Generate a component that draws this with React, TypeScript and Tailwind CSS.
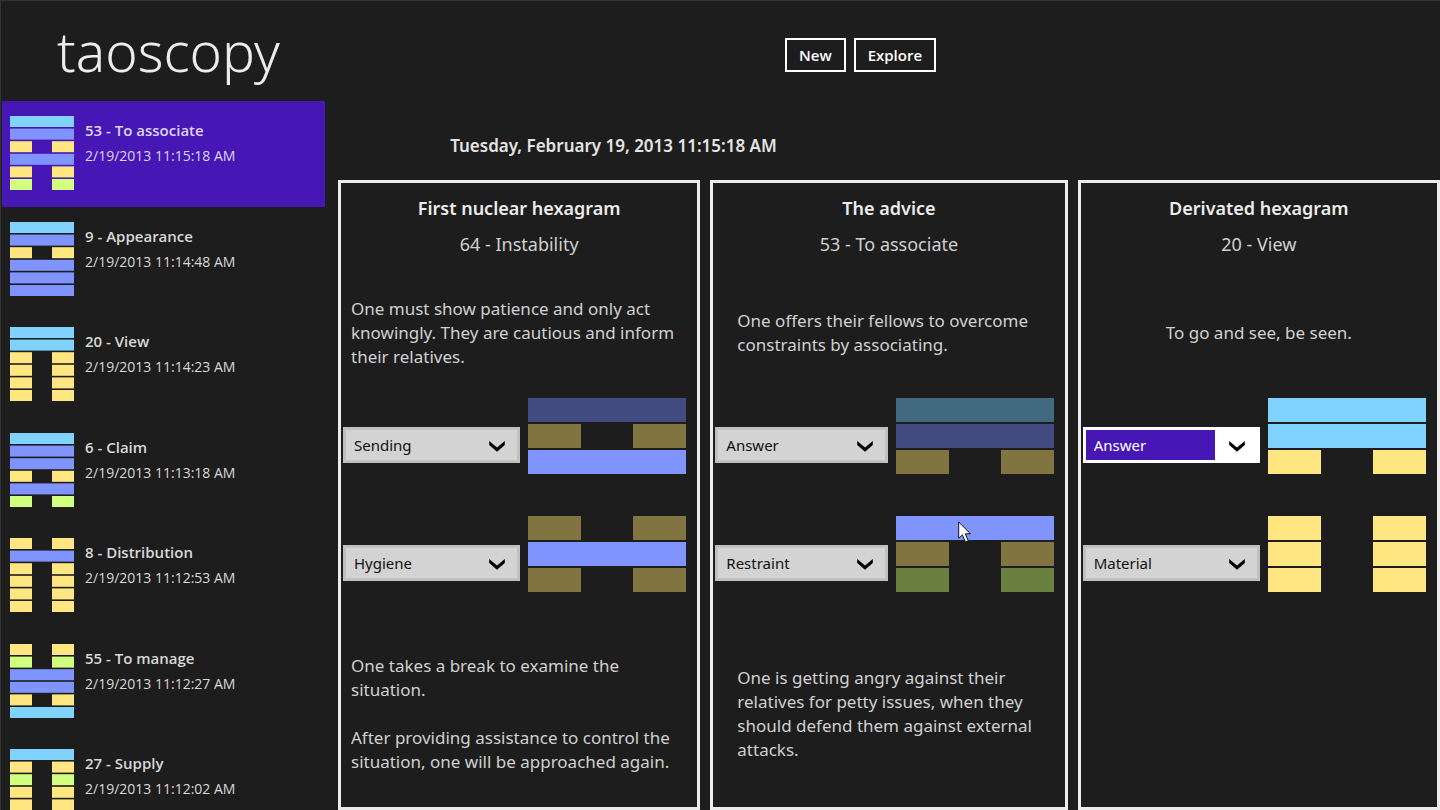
import { useState } from 'react'

type LineKind = 'sky' | 'blue' | 'yellow' | 'green'

type HistoryEntry = {
  id: number
  title: string
  date: string
  lines: LineKind[]
}

type Trigram = {
  id: string
  label: string
  value: string
  lines: LineKind[]
  dimmed: boolean[]
  focused?: boolean
  pointer?: boolean
}

type Reading = {
  id: string
  heading: string
  hexagram: string
  intro: string
  outcome: string[]
  textPadding: string
  trigrams: Trigram[]
}

const LINE_COLORS: Record<LineKind, string> = {
  sky: '#80d2ff',
  blue: '#8094ff',
  yellow: '#ffe680',
  green: '#d2ff80',
}

const DIM_COLORS: Record<LineKind, string> = {
  sky: '#416a80',
  blue: '#414b80',
  yellow: '#807441',
  green: '#698041',
}

const OPTIONS = ['Answer', 'Hygiene', 'Material', 'Restraint', 'Sending']

const HISTORY: HistoryEntry[] = [
  { id: 1, title: '53 - To associate', date: '2/19/2013 11:15:18 AM', lines: ['sky', 'blue', 'yellow', 'blue', 'yellow', 'green'] },
  { id: 2, title: '9 - Appearance', date: '2/19/2013 11:14:48 AM', lines: ['sky', 'blue', 'yellow', 'blue', 'blue', 'blue'] },
  { id: 3, title: '20 - View', date: '2/19/2013 11:14:23 AM', lines: ['sky', 'sky', 'yellow', 'yellow', 'yellow', 'yellow'] },
  { id: 4, title: '6 - Claim', date: '2/19/2013 11:13:18 AM', lines: ['sky', 'blue', 'blue', 'yellow', 'blue', 'green'] },
  { id: 5, title: '8 - Distribution', date: '2/19/2013 11:12:53 AM', lines: ['yellow', 'blue', 'yellow', 'yellow', 'yellow', 'yellow'] },
  { id: 6, title: '55 - To manage', date: '2/19/2013 11:12:27 AM', lines: ['yellow', 'green', 'blue', 'blue', 'yellow', 'sky'] },
  { id: 7, title: '27 - Supply', date: '2/19/2013 11:12:02 AM', lines: ['sky', 'yellow', 'green', 'yellow', 'yellow', 'yellow'] },
]

const READINGS: Reading[] = [
  {
    id: 'nuclear',
    heading: 'First nuclear hexagram',
    hexagram: '64 - Instability',
    intro: 'One must show patience and only act knowingly. They are cautious and inform their relatives.',
    outcome: [
      'One takes a break to examine the situation.',
      'After providing assistance to control the situation, one will be approached again.',
    ],
    textPadding: 'px-[10px]',
    trigrams: [
      { id: 'nuclear-upper', label: 'Upper trigram', value: 'Sending', lines: ['blue', 'yellow', 'blue'], dimmed: [true, true, false] },
      { id: 'nuclear-lower', label: 'Lower trigram', value: 'Hygiene', lines: ['yellow', 'blue', 'yellow'], dimmed: [true, false, true] },
    ],
  },
  {
    id: 'advice',
    heading: 'The advice',
    hexagram: '53 - To associate',
    intro: 'One offers their fellows to overcome constraints by associating.',
    outcome: [
      'One is getting angry against their relatives for petty issues, when they should defend them against external attacks.',
    ],
    textPadding: 'px-6',
    trigrams: [
      { id: 'advice-upper', label: 'Upper trigram', value: 'Answer', lines: ['sky', 'blue', 'yellow'], dimmed: [true, true, true] },
      { id: 'advice-lower', label: 'Lower trigram', value: 'Restraint', lines: ['blue', 'yellow', 'green'], dimmed: [false, true, true], pointer: true },
    ],
  },
  {
    id: 'derivated',
    heading: 'Derivated hexagram',
    hexagram: '20 - View',
    intro: 'To go and see, be seen.',
    outcome: [],
    textPadding: 'px-6',
    trigrams: [
      { id: 'derivated-upper', label: 'Upper trigram', value: 'Answer', lines: ['sky', 'sky', 'yellow'], dimmed: [false, false, false], focused: true },
      { id: 'derivated-lower', label: 'Lower trigram', value: 'Material', lines: ['yellow', 'yellow', 'yellow'], dimmed: [false, false, false] },
    ],
  },
]

// sky and blue are solid lines, yellow and green are broken ones
function isSolid(kind: LineKind) {
  return kind === 'sky' || kind === 'blue'
}

function Hexagram({ lines }: { lines: LineKind[] }) {
  return (
    <svg className="h-[74px] w-16 shrink-0" viewBox="0 0 64 74" aria-hidden="true">
      {lines.map((kind, i) => {
        const y = i * 12.6
        return isSolid(kind) ? (
          <rect key={i} x="0" y={y} width="64" height="11" fill={LINE_COLORS[kind]} />
        ) : (
          <g key={i} fill={LINE_COLORS[kind]}>
            <rect x="0" y={y} width="22" height="11" />
            <rect x="42" y={y} width="22" height="11" />
          </g>
        )
      })}
    </svg>
  )
}

function TrigramDrawing({ lines, dimmed }: { lines: LineKind[]; dimmed: boolean[] }) {
  return (
    <svg className="h-[76px] w-[158px]" viewBox="0 0 158 76" aria-hidden="true">
      {lines.map((kind, i) => {
        const y = i * 26
        const fill = dimmed[i] ? DIM_COLORS[kind] : LINE_COLORS[kind]
        return isSolid(kind) ? (
          <rect key={i} x="0" y={y} width="158" height="24" fill={fill} />
        ) : (
          <g key={i} fill={fill}>
            <rect x="0" y={y} width="53" height="24" />
            <rect x="105" y={y} width="53" height="24" />
          </g>
        )
      })}
    </svg>
  )
}

function Pointer() {
  return (
    <svg className="absolute top-[5px] left-[62px] h-[22px] w-[14px]" viewBox="0 0 14 22" aria-hidden="true">
      <path
        d="M0.7 0.9V17.4L4.4 13.9L7.4 20.9L10.3 19.7L7.3 12.8H12.4Z"
        fill="#fff"
        stroke="#111"
        strokeWidth="1"
      />
    </svg>
  )
}

function TrigramRow({ trigram }: { trigram: Trigram }) {
  const [value, setValue] = useState(trigram.value)

  return (
    <div className="flex items-end gap-2 pr-[11px] pl-0.5">
      <div
        className={`relative mb-[11px] min-w-0 flex-1 border-[3px] ${
          trigram.focused ? 'border-white' : 'border-[#c0c0c0]'
        }`}
      >
        <select
          id={trigram.id}
          aria-label={trigram.label}
          value={value}
          onChange={(e) => setValue(e.target.value)}
          className={`block h-[30px] w-full appearance-none rounded-none pl-2 text-[15px] outline-none ${
            trigram.focused
              ? 'border-r-[42px] border-white bg-[#4617b4] text-white'
              : 'bg-[#d3d3d3] text-[#111]'
          }`}
        >
          {OPTIONS.map((option) => (
            <option key={option}>{option}</option>
          ))}
        </select>
        <svg
          className="pointer-events-none absolute top-[11px] right-3 h-[11px] w-4"
          viewBox="0 0 16 11"
          aria-hidden="true"
        >
          <path d="M0.2 0L8 6.4L15.8 0V3.9L8 10.8L0.2 3.9Z" fill="#000" />
        </svg>
      </div>
      <div className="relative shrink-0">
        <TrigramDrawing lines={trigram.lines} dimmed={trigram.dimmed} />
        {trigram.pointer && <Pointer />}
      </div>
    </div>
  )
}

function ReadingPanel({ reading }: { reading: Reading }) {
  return (
    <section className="flex min-w-0 flex-col border-[3px] border-[#ececec]">
      <div className="pt-[13px] text-center text-lg leading-6">
        <h3 className="font-semibold text-[#ececec]">{reading.heading}</h3>
        <p className="mt-3">{reading.hexagram}</p>
      </div>
      <div className={`flex h-[142px] items-center justify-center pt-3 ${reading.textPadding}`}>
        <p className="leading-6">{reading.intro}</p>
      </div>
      <div className="flex flex-col gap-[42px]">
        {reading.trigrams.map((trigram) => (
          <TrigramRow key={trigram.id} trigram={trigram} />
        ))}
      </div>
      <div className={`flex flex-1 items-center justify-center pt-7 ${reading.textPadding}`}>
        <div className="space-y-6">
          {reading.outcome.map((text) => (
            <p key={text} className="leading-6">
              {text}
            </p>
          ))}
        </div>
      </div>
    </section>
  )
}

function History() {
  const [selected, setSelected] = useState(1)

  return (
    <ul className="flex-1 overflow-hidden pr-[13px] pl-px">
      {HISTORY.map((entry) => (
        <li key={entry.id} className="h-[106px] even:h-[105px]">
          <button
            type="button"
            onClick={() => setSelected(entry.id)}
            className={`flex h-full w-full items-start gap-[11px] px-2 pt-[15px] text-left ${
              entry.id === selected ? 'bg-[#4617b4] text-[#ded5f5]' : 'text-[#d8d8d8]'
            }`}
          >
            <Hexagram lines={entry.lines} />
            <span className="flex flex-col pt-0.5 font-['Open_Sans','Noto_Sans',sans-serif] text-sm leading-[25px]">
              <span className="text-[15px] leading-[25px] font-semibold">{entry.title}</span>
              <span>{entry.date}</span>
            </span>
          </button>
        </li>
      ))}
    </ul>
  )
}

export default function App() {
  return (
    <div className="flex h-screen flex-col overflow-hidden border-t border-l border-[#333] bg-[#1d1d1d] font-['Noto_Sans','Open_Sans',sans-serif] text-[17px] text-[#d0d0d0]">
      <header className="flex h-[100px] shrink-0 items-center">
        <h1 className="w-[784px] shrink-0 pl-14 font-['Noto_Sans','Open_Sans',sans-serif] text-[55px] leading-[100px] font-light text-[#ececec]">
          taoscopy
        </h1>
        <div className="flex gap-2 pt-2 font-['Open_Sans','Noto_Sans',sans-serif] text-[15px] font-semibold text-white">
          <button type="button" className="h-[34px] border-2 border-white px-3">
            New
          </button>
          <button type="button" className="h-[34px] border-2 border-white px-3">
            Explore
          </button>
        </div>
      </header>
      <div className="flex min-h-0 flex-1">
        <aside className="flex w-[337px] shrink-0 flex-col">
          <History />
        </aside>
        <main className="flex min-w-0 flex-1 flex-col">
          <h2 className="flex h-[79px] w-1/2 shrink-0 items-center justify-center pt-[10px] font-semibold whitespace-nowrap text-[#e4e4e4]">
            Tuesday, February 19, 2013 11:15:18 AM
          </h2>
          <div className="grid min-h-0 flex-1 grid-cols-[362fr_357fr_362fr] gap-[10px]">
            {READINGS.map((reading) => (
              <ReadingPanel key={reading.id} reading={reading} />
            ))}
          </div>
        </main>
      </div>
    </div>
  )
}
